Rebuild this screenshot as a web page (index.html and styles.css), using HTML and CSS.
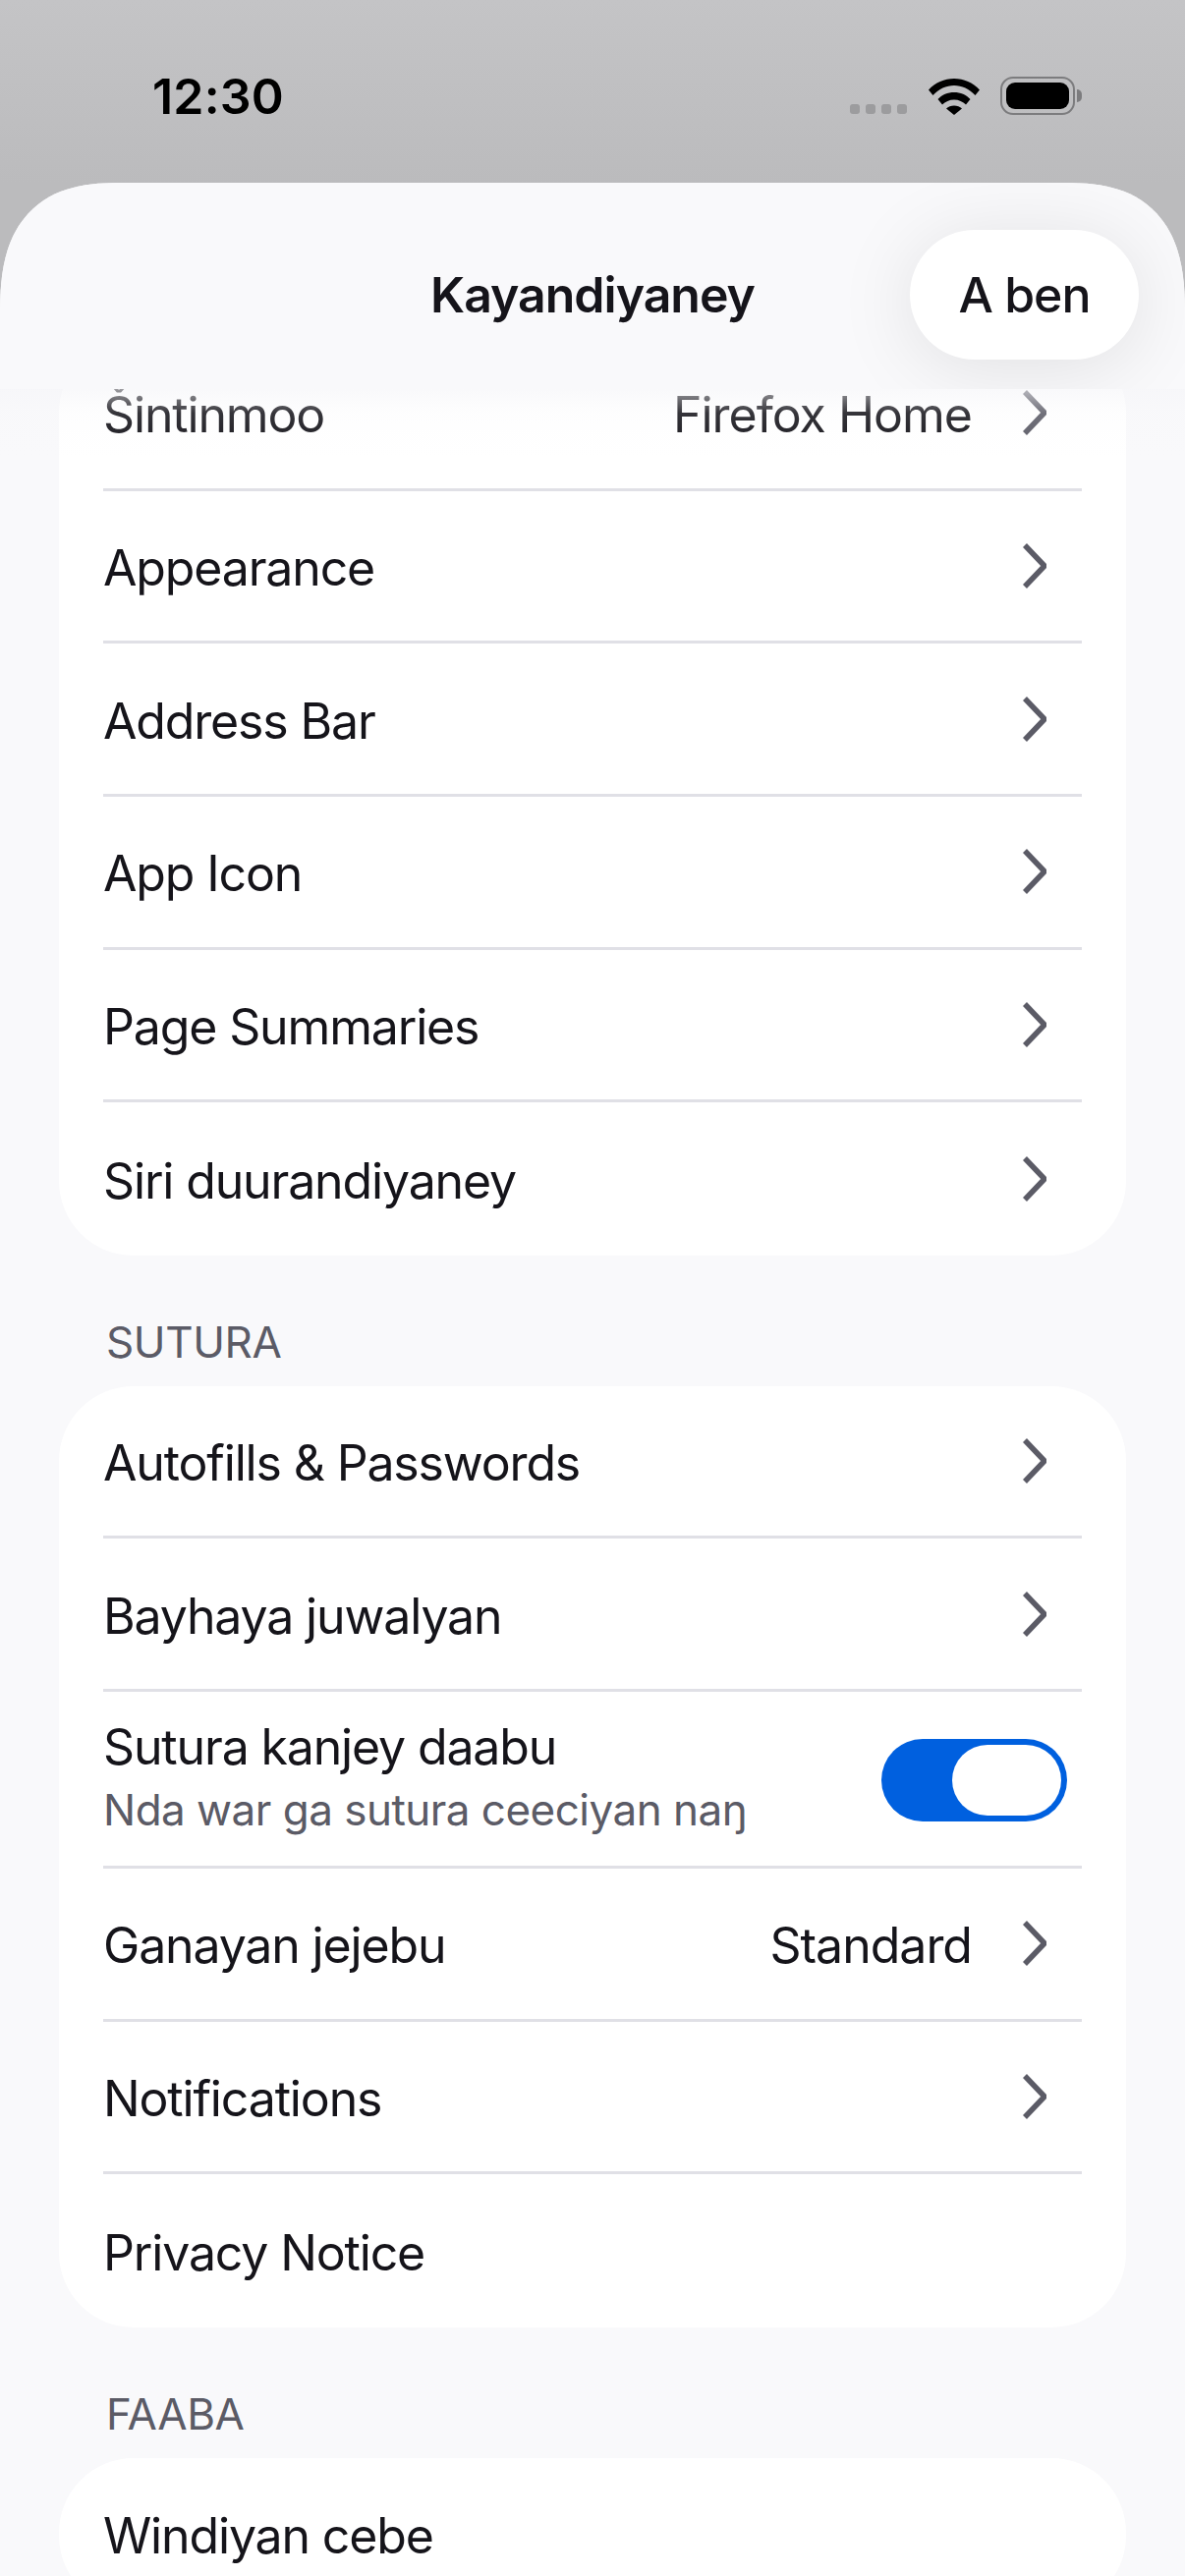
FILE: index.html
```html
<!doctype html>
<html>
<head>
  <meta charset="utf-8">
  <title>Kayandiyaney</title>
  <link rel="stylesheet" href="styles.css">
</head>
<body>

  <div class="status">
    <span class="clock">12:30</span>
    <div class="status-icons">
      <div class="signal"><i></i><i></i><i></i><i></i></div>
      <svg class="wifi" width="52" height="38" viewBox="0 0 52 38">
        <path d="M0 12.5C7 5 16 1 26 1s19 4 26 11.500l-4.500 5.500C41.500 11.500 34 8 26 8S10.500 11.500 4.500 18Z"/>
        <path d="M9.500 22C13.500 17.500 19.500 15 26 15s12.500 2.500 16.500 7L38 27.500C35 24.500 30.800 22.500 26 22.500S17 24.500 14 27.500Z"/>
        <path d="M18 31.500C20 29.500 23 28.500 26 28.500s6 1 8 3L26 38Z"/>
      </svg>
      <div class="battery"><div class="battery-level"></div></div>
    </div>
  </div>

  <div class="sheet">
    <header class="topbar">
      <span class="topbar-title">Kayandiyaney</span>
      <button class="done">A ben</button>
    </header>
    <div class="topbar-fade"></div>

    <div class="list">
      <div class="card">
        <div class="row"><span class="label">Šintinmoo</span><span class="value">Firefox Home</span>
          <svg class="chev" width="24" height="46" viewBox="0 0 24 46"><path d="M2 2l20 21L2 44"/></svg></div>
        <div class="row"><span class="label">Appearance</span>
          <svg class="chev" width="24" height="46" viewBox="0 0 24 46"><path d="M2 2l20 21L2 44"/></svg></div>
        <div class="row"><span class="label">Address Bar</span>
          <svg class="chev" width="24" height="46" viewBox="0 0 24 46"><path d="M2 2l20 21L2 44"/></svg></div>
        <div class="row"><span class="label">App Icon</span>
          <svg class="chev" width="24" height="46" viewBox="0 0 24 46"><path d="M2 2l20 21L2 44"/></svg></div>
        <div class="row"><span class="label">Page Summaries</span>
          <svg class="chev" width="24" height="46" viewBox="0 0 24 46"><path d="M2 2l20 21L2 44"/></svg></div>
        <div class="row"><span class="label">Siri duurandiyaney</span>
          <svg class="chev" width="24" height="46" viewBox="0 0 24 46"><path d="M2 2l20 21L2 44"/></svg></div>
      </div>

      <h2 class="section">SUTURA</h2>
      <div class="card">
        <div class="row"><span class="label">Autofills &amp; Passwords</span>
          <svg class="chev" width="24" height="46" viewBox="0 0 24 46"><path d="M2 2l20 21L2 44"/></svg></div>
        <div class="row"><span class="label">Bayhaya juwalyan</span>
          <svg class="chev" width="24" height="46" viewBox="0 0 24 46"><path d="M2 2l20 21L2 44"/></svg></div>
        <div class="row row-tall">
          <div class="stack">
            <span class="label">Sutura kanjey daabu</span>
            <span class="sub">Nda war ga sutura ceeciyan naŋ</span>
          </div>
          <div class="toggle"><div class="knob"></div></div>
        </div>
        <div class="row"><span class="label">Ganayan jejebu</span><span class="value">Standard</span>
          <svg class="chev" width="24" height="46" viewBox="0 0 24 46"><path d="M2 2l20 21L2 44"/></svg></div>
        <div class="row"><span class="label">Notifications</span>
          <svg class="chev" width="24" height="46" viewBox="0 0 24 46"><path d="M2 2l20 21L2 44"/></svg></div>
        <div class="row"><span class="label">Privacy Notice</span></div>
      </div>

      <h2 class="section">FAABA</h2>
      <div class="card">
        <div class="row"><span class="label">Windiyan cebe</span></div>
      </div>
    </div>
  </div>

</body>
</html>
```

FILE: styles.css
```css
html, body {
  margin: 0;
  height: 2622px;
  overflow: hidden;
}

body {
  display: flex;
  flex-direction: column;
  background: linear-gradient(#c4c4c6, #bbbbbd 186px);
  font-family: Inter, "Liberation Sans", sans-serif;
  color: #15141a;
}

/* status bar */
.status {
  height: 186px;
  flex: none;
  display: flex;
  justify-content: space-between;
  align-items: flex-start;
  box-sizing: border-box;
  padding: 68px 112px 0 155px;
}

.clock {
  font-size: 50px;
  line-height: 60px;
  font-weight: 600;
  color: #000;
  letter-spacing: 0.2px;
}

.status-icons {
  display: flex;
  align-items: flex-start;
  padding-top: 10px;
}

.signal {
  display: flex;
  gap: 6px;
  margin: 28px 22px 0 0;
}

.signal i {
  width: 10px;
  height: 10px;
  border-radius: 3px;
  background: #9c9c9e;
}

.wifi {
  display: block;
  margin-top: 1px;
}

.battery {
  position: relative;
  box-sizing: border-box;
  width: 76px;
  height: 39px;
  margin-left: 21px;
  padding: 4px;
  border: 2px solid #7c7c7e;
  border-radius: 13px;
}

.battery::after {
  content: "";
  position: absolute;
  right: -9px;
  top: 11px;
  width: 5px;
  height: 13px;
  border-radius: 0 6px 6px 0;
  background: #7c7c7e;
}

.battery-level {
  height: 100%;
  background: #000;
  border-radius: 9px;
}

/* sheet */
.sheet {
  position: relative;
  flex: 1;
  overflow: hidden;
  background: #f9f9fb;
  border-radius: 125px 125px 0 0 / 135px 135px 0 0;
  corner-shape: superellipse(1.4);
}

.topbar {
  position: absolute;
  top: 0;
  left: 0;
  right: 0;
  height: 210px;
  z-index: 2;
  overflow: hidden;
  background: #f9f9fb;
  display: flex;
  align-items: center;
  justify-content: center;
}

/* soft fade under the bar where rows scroll beneath it */
.topbar-fade {
  position: absolute;
  top: 210px;
  left: 0;
  right: 0;
  height: 70px;
  z-index: 2;
  background: linear-gradient(rgba(245, 245, 248, 0.6), rgba(245, 245, 248, 0.14) 35%, rgba(245, 245, 248, 0));
}

.topbar-title {
  font-size: 50px;
  font-weight: 600;
  letter-spacing: -1px;
  margin-top: 18px;
}

.done {
  position: absolute;
  right: 47px;
  top: 48px;
  width: 233px;
  height: 132px;
  border: 0;
  border-radius: 66px;
  background: #fff;
  box-shadow: 0 8px 80px rgba(0, 0, 0, 0.1);
  font: 500 50px Inter, sans-serif;
  letter-spacing: -1px;
  color: #15141a;
  padding: 0;
}

/* settings list */
.list {
  padding: 158px 60px 0;
}

.card {
  background: #fff;
  border-radius: 76px;
  padding-left: 45px;
  padding-right: 45px;
}

.row {
  display: flex;
  align-items: center;
  box-sizing: border-box;
  height: 155.7px;
  border-bottom: 3px solid #e0e0e6;
  font-size: 50px;
}

.row:last-child {
  border-bottom: 0;
}

.row-tall {
  height: 180px;
}

.label {
  flex: 1;
  white-space: nowrap;
  letter-spacing: -1.15px;
  padding-top: 4px;
}

.value {
  margin-right: 52px;
  letter-spacing: -1px;
  padding-top: 4px;
}

.chev {
  flex: none;
  margin-right: 36px;
}

.chev path {
  fill: none;
  stroke: #5b5b66;
  stroke-width: 5.5;
}

.stack {
  flex: 1;
  display: flex;
  flex-direction: column;
  gap: 7.5px;
  padding-bottom: 4.5px;
  min-width: 0;
}

.stack .label {
  flex: none;
  padding-top: 0;
}

.sub {
  white-space: nowrap;
  font-size: 44px;
  letter-spacing: -0.52px;
  color: #5b5b66;
}

.toggle {
  flex: none;
  display: flex;
  justify-content: flex-end;
  box-sizing: border-box;
  width: 189px;
  height: 84px;
  margin-right: 15px;
  margin-top: 2px;
  padding: 6px;
  border-radius: 42px;
  background: #0060df;
}

.knob {
  width: 111px;
  height: 72px;
  border-radius: 36px;
  background: #fff;
}

.section {
  margin: 0;
  padding: 54px 0 10.5px 48px;
  font-size: 44px;
  line-height: 68px;
  font-weight: 400;
  letter-spacing: -0.4px;
  color: #5b5b66;
}
```
